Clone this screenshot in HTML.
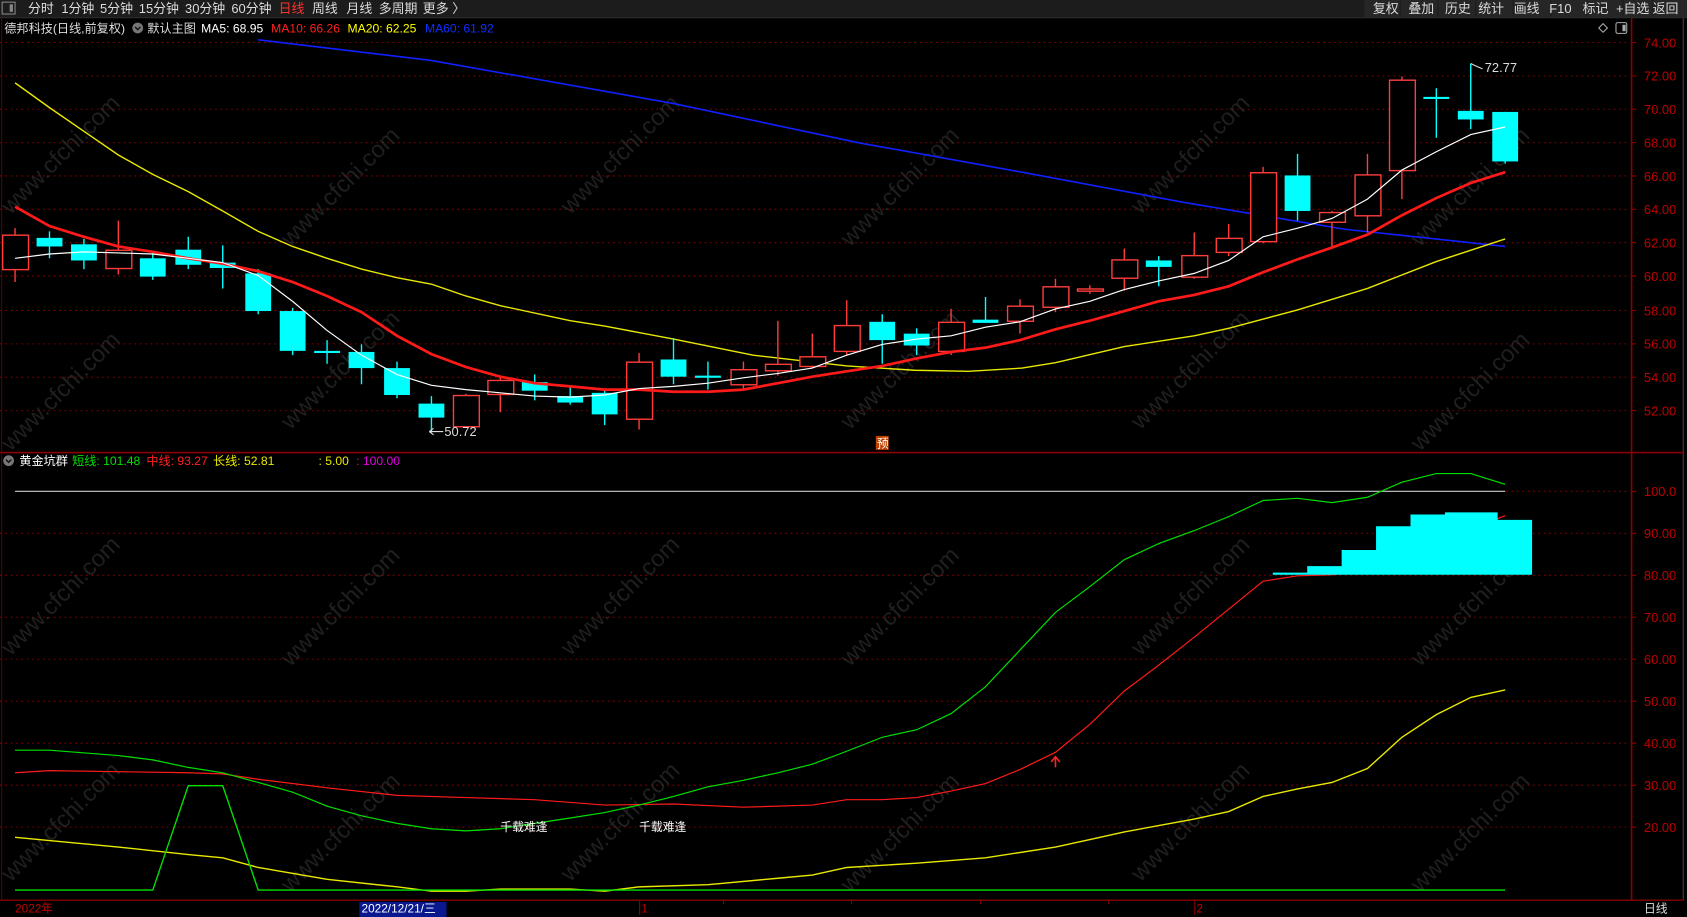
<!DOCTYPE html>
<html><head><meta charset="utf-8">
<style>
html,body{margin:0;padding:0;background:#000;overflow:hidden;}
svg{display:block;}
text{font-family:"Liberation Sans","Noto Sans CJK SC",sans-serif;}
</style></head>
<body>
<svg width="1687" height="917" viewBox="0 0 1568 852" preserveAspectRatio="none" xmlns="http://www.w3.org/2000/svg">
<rect x="0" y="0" width="1568" height="852" fill="#000"/>
<rect x="0" y="0" width="1568" height="16" fill="#1c1c1c"/>
<line x1="0" y1="16.5" x2="1568" y2="16.5" stroke="#333"/>
<rect x="2" y="2" width="12" height="11" fill="none" stroke="#888"/>
<rect x="9" y="4" width="3" height="7" fill="#888"/>
<g font-size="12" fill="#ddd">
<text x="26" y="12">分时</text><text x="57" y="12">1分钟</text><text x="93" y="12">5分钟</text>
<text x="129" y="12">15分钟</text><text x="172" y="12">30分钟</text><text x="215" y="12">60分钟</text>
<text x="259" y="12" fill="#ff3030">日线</text><text x="290" y="12">周线</text><text x="322" y="12">月线</text>
<text x="352" y="12">多周期</text><text x="393" y="12">更多 〉</text>
</g>
<g fill="#262626">
<rect x="1268" y="0" width="33" height="16"/><rect x="1302" y="0" width="34" height="16"/><rect x="1337" y="0" width="34" height="16"/>
<rect x="1372" y="0" width="34" height="16"/><rect x="1407" y="0" width="34" height="16"/><rect x="1442" y="0" width="32" height="16"/>
<rect x="1475" y="0" width="33" height="16"/><rect x="1509" y="0" width="27" height="16"/><rect x="1537" y="0" width="31" height="16"/>
</g>
<g font-size="12" fill="#ddd">
<text x="1276" y="12">复权</text><text x="1309" y="12">叠加</text><text x="1343" y="12">历史</text><text x="1374" y="12">统计</text>
<text x="1407" y="12">画线</text><text x="1440" y="12">F10</text><text x="1471" y="12">标记</text><text x="1502" y="12">+自选</text><text x="1536" y="12">返回</text>
</g>
<g font-size="11.3">
<text x="4" y="30" fill="#ddd">德邦科技(日线,前复权)</text>
<circle cx="128" cy="26" r="5" fill="#777"/><path d="M125.5 25 L128 27.5 L130.5 25" stroke="#111" fill="none" stroke-width="1.3"/>
<text x="137" y="30" fill="#ddd">默认主图</text>
<text x="187" y="30" fill="#fff">MA5: 68.95</text>
<text x="252" y="30" fill="#ff2020">MA10: 66.26</text>
<text x="323" y="30" fill="#ffff00">MA20: 62.25</text>
<text x="395" y="30" fill="#1030ff">MA60: 61.92</text>
</g>
<path d="M1490 22 L1494 26 L1490 30 L1486 26 Z" fill="none" stroke="#aaa"/>
<rect x="1502" y="21" width="10" height="10" rx="1.5" fill="none" stroke="#aaa"/><rect x="1508" y="23" width="3" height="6" fill="#aaa"/>

<line x1="1516.5" y1="17" x2="1516.5" y2="852" stroke="#8b0000" stroke-width="1.5"/>
<line x1="1564.5" y1="17" x2="1564.5" y2="852" stroke="#444" stroke-width="1"/>
<line x1="0" y1="420.5" x2="1565" y2="420.5" stroke="#8b0000" stroke-width="1.5"/>
<line x1="0" y1="836.5" x2="1565" y2="836.5" stroke="#8b0000" stroke-width="1.5"/>
<line x1="1.5" y1="17" x2="1.5" y2="836" stroke="#5a0000"/>

<g stroke="#8b0000" stroke-dasharray="1.5,3.5" stroke-width="1">
<line x1="0" y1="39.5" x2="1512" y2="39.5"/><line x1="0" y1="70.5" x2="1512" y2="70.5"/><line x1="0" y1="101.5" x2="1512" y2="101.5"/>
<line x1="0" y1="132.5" x2="1512" y2="132.5"/><line x1="0" y1="163.5" x2="1512" y2="163.5"/><line x1="0" y1="194.5" x2="1512" y2="194.5"/>
<line x1="0" y1="225.5" x2="1512" y2="225.5"/><line x1="0" y1="256.5" x2="1512" y2="256.5"/><line x1="0" y1="288.5" x2="1512" y2="288.5"/>
<line x1="0" y1="319.5" x2="1512" y2="319.5"/><line x1="0" y1="350.5" x2="1512" y2="350.5"/><line x1="0" y1="381.5" x2="1512" y2="381.5"/>
<line x1="0" y1="495.5" x2="1512" y2="495.5"/><line x1="0" y1="534.5" x2="1512" y2="534.5"/><line x1="0" y1="573.5" x2="1512" y2="573.5"/>
<line x1="0" y1="612.5" x2="1512" y2="612.5"/><line x1="0" y1="651.5" x2="1512" y2="651.5"/><line x1="0" y1="690.5" x2="1512" y2="690.5"/>
<line x1="0" y1="729.5" x2="1512" y2="729.5"/><line x1="0" y1="768.5" x2="1512" y2="768.5"/>
</g>
<g fill="#c00000" font-size="12" text-anchor="end">
<text x="1558" y="44">74.00</text><text x="1558" y="75">72.00</text><text x="1558" y="106">70.00</text><text x="1558" y="137">68.00</text>
<text x="1558" y="168">66.00</text><text x="1558" y="199">64.00</text><text x="1558" y="230">62.00</text><text x="1558" y="261">60.00</text>
<text x="1558" y="293">58.00</text><text x="1558" y="324">56.00</text><text x="1558" y="355">54.00</text><text x="1558" y="386">52.00</text>
<text x="1558" y="461">100.0</text><text x="1558" y="500">90.00</text><text x="1558" y="539">80.00</text><text x="1558" y="578">70.00</text>
<text x="1558" y="617">60.00</text><text x="1558" y="656">50.00</text><text x="1558" y="695">40.00</text><text x="1558" y="734">30.00</text>
<text x="1558" y="773">20.00</text>
</g>
<g stroke="#8b0000">
<path d="M1516 39.5h5M1516 70.5h5M1516 101.5h5M1516 132.5h5M1516 163.5h5M1516 194.5h5M1516 225.5h5M1516 256.5h5M1516 288.5h5M1516 319.5h5M1516 350.5h5M1516 381.5h5M1516 456.5h5M1516 495.5h5M1516 534.5h5M1516 573.5h5M1516 612.5h5M1516 651.5h5M1516 690.5h5M1516 729.5h5M1516 768.5h5"/>
</g>

<g fill="#3a3a3a" font-size="22" opacity="0.55">
<text transform="translate(10,200) rotate(-45)">www.cfchi.com</text>
<text transform="translate(270,230) rotate(-45)">www.cfchi.com</text>
<text transform="translate(530,200) rotate(-45)">www.cfchi.com</text>
<text transform="translate(790,230) rotate(-45)">www.cfchi.com</text>
<text transform="translate(1060,200) rotate(-45)">www.cfchi.com</text>
<text transform="translate(1320,230) rotate(-45)">www.cfchi.com</text>
<text transform="translate(10,420) rotate(-45)">www.cfchi.com</text>
<text transform="translate(270,400) rotate(-45)">www.cfchi.com</text>
<text transform="translate(790,400) rotate(-45)">www.cfchi.com</text>
<text transform="translate(1060,400) rotate(-45)">www.cfchi.com</text>
<text transform="translate(1320,420) rotate(-45)">www.cfchi.com</text>
<text transform="translate(10,610) rotate(-45)">www.cfchi.com</text>
<text transform="translate(270,620) rotate(-45)">www.cfchi.com</text>
<text transform="translate(530,610) rotate(-45)">www.cfchi.com</text>
<text transform="translate(790,620) rotate(-45)">www.cfchi.com</text>
<text transform="translate(1060,610) rotate(-45)">www.cfchi.com</text>
<text transform="translate(1320,620) rotate(-45)">www.cfchi.com</text>
<text transform="translate(10,820) rotate(-45)">www.cfchi.com</text>
<text transform="translate(270,830) rotate(-45)">www.cfchi.com</text>
<text transform="translate(530,820) rotate(-45)">www.cfchi.com</text>
<text transform="translate(790,830) rotate(-45)">www.cfchi.com</text>
<text transform="translate(1060,820) rotate(-45)">www.cfchi.com</text>
<text transform="translate(1320,830) rotate(-45)">www.cfchi.com</text>
</g>

<polyline fill="none" stroke="#1020ff" stroke-width="1.5" points="240,37 400,56 625,96 800,133 950,160 1100,188 1250,213 1399,229"/>
<polyline fill="none" stroke="#e8e800" stroke-width="1.3" points="14,77 46,100 78,122 110,144 142,162 175,178 207,196 240,215 272,229 304,240 336,250 369,258 401,264 433,275 465,284 530,298 562,303 626,315 700,330 787,340 850,344 900,345 950,342 981,337 1045,322 1110,312 1142,305 1206,288 1271,268 1335,243 1399,222"/>

<g stroke-width="1.3">
<g stroke="#00ffff">
<path d="M46 215V240M78 222V250M142 235V260M175 220V250M207 228V268M240 250V292M272 286V330M304 316V338M336 320V357M369 336V370M401 368V402M497 348V372M530 358V376M562 362V395M626 314V357M658 336V362M820 292V338M852 305V330M916 276V300M1077 238V266M1206 143V205M1335 82V128M1367 59V120M1399 104V152"/>
</g>
<g stroke="#ff3c3c">
<path d="M14 212V262M110 205V255M433 366V396M465 350V383M594 328V399M691 336V362M723 298V349M755 310V342M787 279V330M884 287V330M948 278V310M981 259V290M1013 265V273M1045 231V270M1110 216V259M1142 208V238M1174 155V226M1238 196V231M1271 143V216M1303 71V185"/>
</g>
<g fill="#00ffff">
<rect x="34" y="221" width="24" height="8"/><rect x="66" y="227" width="24" height="15"/><rect x="130" y="240" width="24" height="17"/>
<rect x="163" y="232" width="24" height="14"/><rect x="195" y="244" width="24" height="5"/><rect x="228" y="254" width="24" height="35"/>
<rect x="260" y="289" width="24" height="37"/><rect x="292" y="326" width="24" height="2"/><rect x="324" y="327" width="24" height="15"/>
<rect x="357" y="342" width="24" height="25"/><rect x="389" y="375" width="24" height="13"/><rect x="485" y="355" width="24" height="8"/>
<rect x="518" y="368" width="24" height="6"/><rect x="550" y="365" width="24" height="20"/><rect x="614" y="334" width="24" height="16"/>
<rect x="646" y="349" width="24" height="2"/><rect x="808" y="299" width="24" height="17"/><rect x="840" y="310" width="24" height="11"/>
<rect x="904" y="297" width="24" height="3"/><rect x="1065" y="242" width="24" height="6"/><rect x="1194" y="163" width="24" height="33"/>
<rect x="1323" y="90" width="24" height="2"/><rect x="1355" y="103" width="24" height="8"/><rect x="1387" y="104" width="24" height="46"/>
</g>
<g fill="#000" stroke="#ff3c3c">
<rect x="2.5" y="218.5" width="24" height="32"/><rect x="98.5" y="232.5" width="24" height="17"/><rect x="421.5" y="367.5" width="24" height="29"/>
<rect x="453.5" y="353.5" width="24" height="13"/><rect x="582.5" y="336.5" width="24" height="53"/><rect x="679.5" y="343.5" width="24" height="14"/>
<rect x="711.5" y="338.5" width="24" height="6"/><rect x="743.5" y="331.5" width="24" height="9"/><rect x="775.5" y="302.5" width="24" height="24"/>
<rect x="872.5" y="299.5" width="24" height="27"/><rect x="936.5" y="284.5" width="24" height="14"/><rect x="969.5" y="266.5" width="24" height="19"/>
<rect x="1001.5" y="268.5" width="24" height="2"/><rect x="1033.5" y="241.5" width="24" height="17"/><rect x="1098.5" y="237.5" width="24" height="20"/>
<rect x="1130.5" y="221.5" width="24" height="13"/><rect x="1162.5" y="160.5" width="24" height="64"/><rect x="1226.5" y="197.5" width="24" height="9"/>
<rect x="1259.5" y="162.5" width="24" height="38"/><rect x="1291.5" y="74.5" width="24" height="84"/>
</g>
</g>
<polyline fill="none" stroke="#ff1a1a" stroke-width="2.5" points="14,192 46,210 78,220 110,229 142,234 175,240 207,245 240,252 272,262 304,275 336,290 369,312 401,329 433,341 465,350 497,356 530,359 562,362 594,362 626,364 658,364 691,362 723,356 755,350 787,345 820,340 852,333 884,327 916,323 948,316 981,306 1013,298 1045,289 1077,280 1110,274 1142,266 1174,253 1206,241 1238,230 1271,218 1303,200 1335,184 1367,170 1399,160"/>
<polyline fill="none" stroke="#ffffff" stroke-width="1.1" points="14,240 46,236 78,234 110,235 142,236 175,240 207,244 240,256 272,280 304,307 336,330 369,348 401,358 433,362 465,365 497,368 530,369 562,367 594,361 626,359 658,356 691,351 723,347 755,342 787,330 820,320 852,315 884,312 916,304 948,299 981,287 1013,280 1045,269 1077,261 1110,254 1142,242 1174,220 1206,212 1238,203 1271,185 1303,158 1335,141 1367,125 1399,118"/>
<path d="M1367 59 L1371 61 L1378 64" stroke="#ddd" fill="none"/>
<text x="1380" y="67" fill="#ddd" font-size="12">72.77</text>
<path d="M399 401 L412 401 M399 401 L403 398 M399 401 L403 404" stroke="#ddd" fill="none"/>
<text x="413" y="405" fill="#ddd" font-size="12">50.72</text>
<rect x="814" y="405" width="12" height="13" fill="#c04000"/>
<text x="815" y="416" fill="#fff" font-size="11">预</text>

<g font-size="11.3">
<circle cx="8" cy="428" r="5" fill="#777"/><path d="M5.5 427 L8 429.5 L10.5 427" stroke="#111" fill="none" stroke-width="1.3"/>
<text x="18" y="432" fill="#fff">黄金坑群</text>
<text x="67" y="432" fill="#00e000">短线: 101.48</text>
<text x="136" y="432" fill="#ff2020">中线: 93.27</text>
<text x="198" y="432" fill="#e8e800">长线: 52.81</text>
<text x="296" y="432" fill="#e8e800">: 5.00</text>
<text x="331" y="432" fill="#e000e0">: 100.00</text>
</g>
<line x1="14" y1="456.5" x2="1399" y2="456.5" stroke="#ccc"/>
<g stroke="#8b0000" stroke-dasharray="1.5,3.5"><line x1="1400" y1="456.5" x2="1512" y2="456.5"/></g>

<polyline fill="none" stroke="#e8e800" stroke-width="1.3" points="14,778 46,781 110,787 175,794 207,797 240,806 304,817 369,824 401,828 433,828 465,826 530,826 562,828 594,824 658,822 723,816 755,813 787,806 852,802 916,797 981,787 1013,780 1045,773 1077,767 1110,761 1142,754 1174,740 1206,733 1238,727 1271,714 1303,685 1335,664 1367,648 1399,641"/>
<polyline fill="none" stroke="#00e000" stroke-width="1.3" points="14,827 142,827 175,730 207,730 240,827 1399,827"/>
<polyline fill="none" stroke="#ff1a1a" stroke-width="1.1" points="14,718 46,716 110,717 175,718 207,719 240,724 304,732 369,739 433,741 497,743 562,748 626,747 691,750 755,748 787,743 820,743 852,741 884,735 916,728 948,715 981,699 1013,673 1045,642 1077,618 1110,592 1142,566 1174,540 1206,535 1238,534 1271,530 1303,520 1335,508 1367,492 1399,479"/>
<path fill="#00ffff" d="M1183 534 V532 H1215 V526 H1247 V511 H1279 V489 H1311 V478 H1343 V476 H1392 V483 H1424 V534 Z"/>
<polyline fill="none" stroke="#00e000" stroke-width="1.1" points="14,697 46,697 110,702 142,706 175,713 207,718 240,727 272,736 304,749 336,758 369,765 401,770 433,772 465,770 497,765 530,760 562,755 594,748 626,740 658,731 691,725 723,718 755,710 787,698 820,685 852,678 884,663 916,638 948,604 981,569 1013,545 1045,520 1077,505 1110,493 1142,480 1174,465 1206,463 1238,467 1271,462 1303,448 1335,440 1367,440 1399,450"/>
<path d="M981 703 V713 M977 708 L981 703 L985 708" stroke="#ff2020" stroke-width="1.5" fill="none"/>
<text x="465" y="772" fill="#fff" font-size="11">千载难逢</text>
<text x="594" y="772" fill="#fff" font-size="11">千载难逢</text>

<rect x="0" y="837" width="1568" height="15" fill="#000"/>
<text x="14" y="848" fill="#c00000" font-size="11">2022年</text>
<rect x="334" y="838" width="81" height="14" fill="#0a1890"/>
<text x="336" y="848" fill="#fff" font-size="11">2022/12/21/三</text>
<line x1="594.5" y1="837" x2="594.5" y2="850" stroke="#8b0000"/>
<text x="596" y="848" fill="#c00000" font-size="11">1</text>
<line x1="1110.5" y1="837" x2="1110.5" y2="850" stroke="#8b0000"/>
<text x="1112" y="848" fill="#c00000" font-size="11">2</text>
<path d="M672.5 837v3M791.5 837v3M911.5 837v3M1030.5 837v3" stroke="#8b0000"/>
<text x="1528" y="848" fill="#ddd" font-size="11">日线</text>
</svg>
</body></html>
